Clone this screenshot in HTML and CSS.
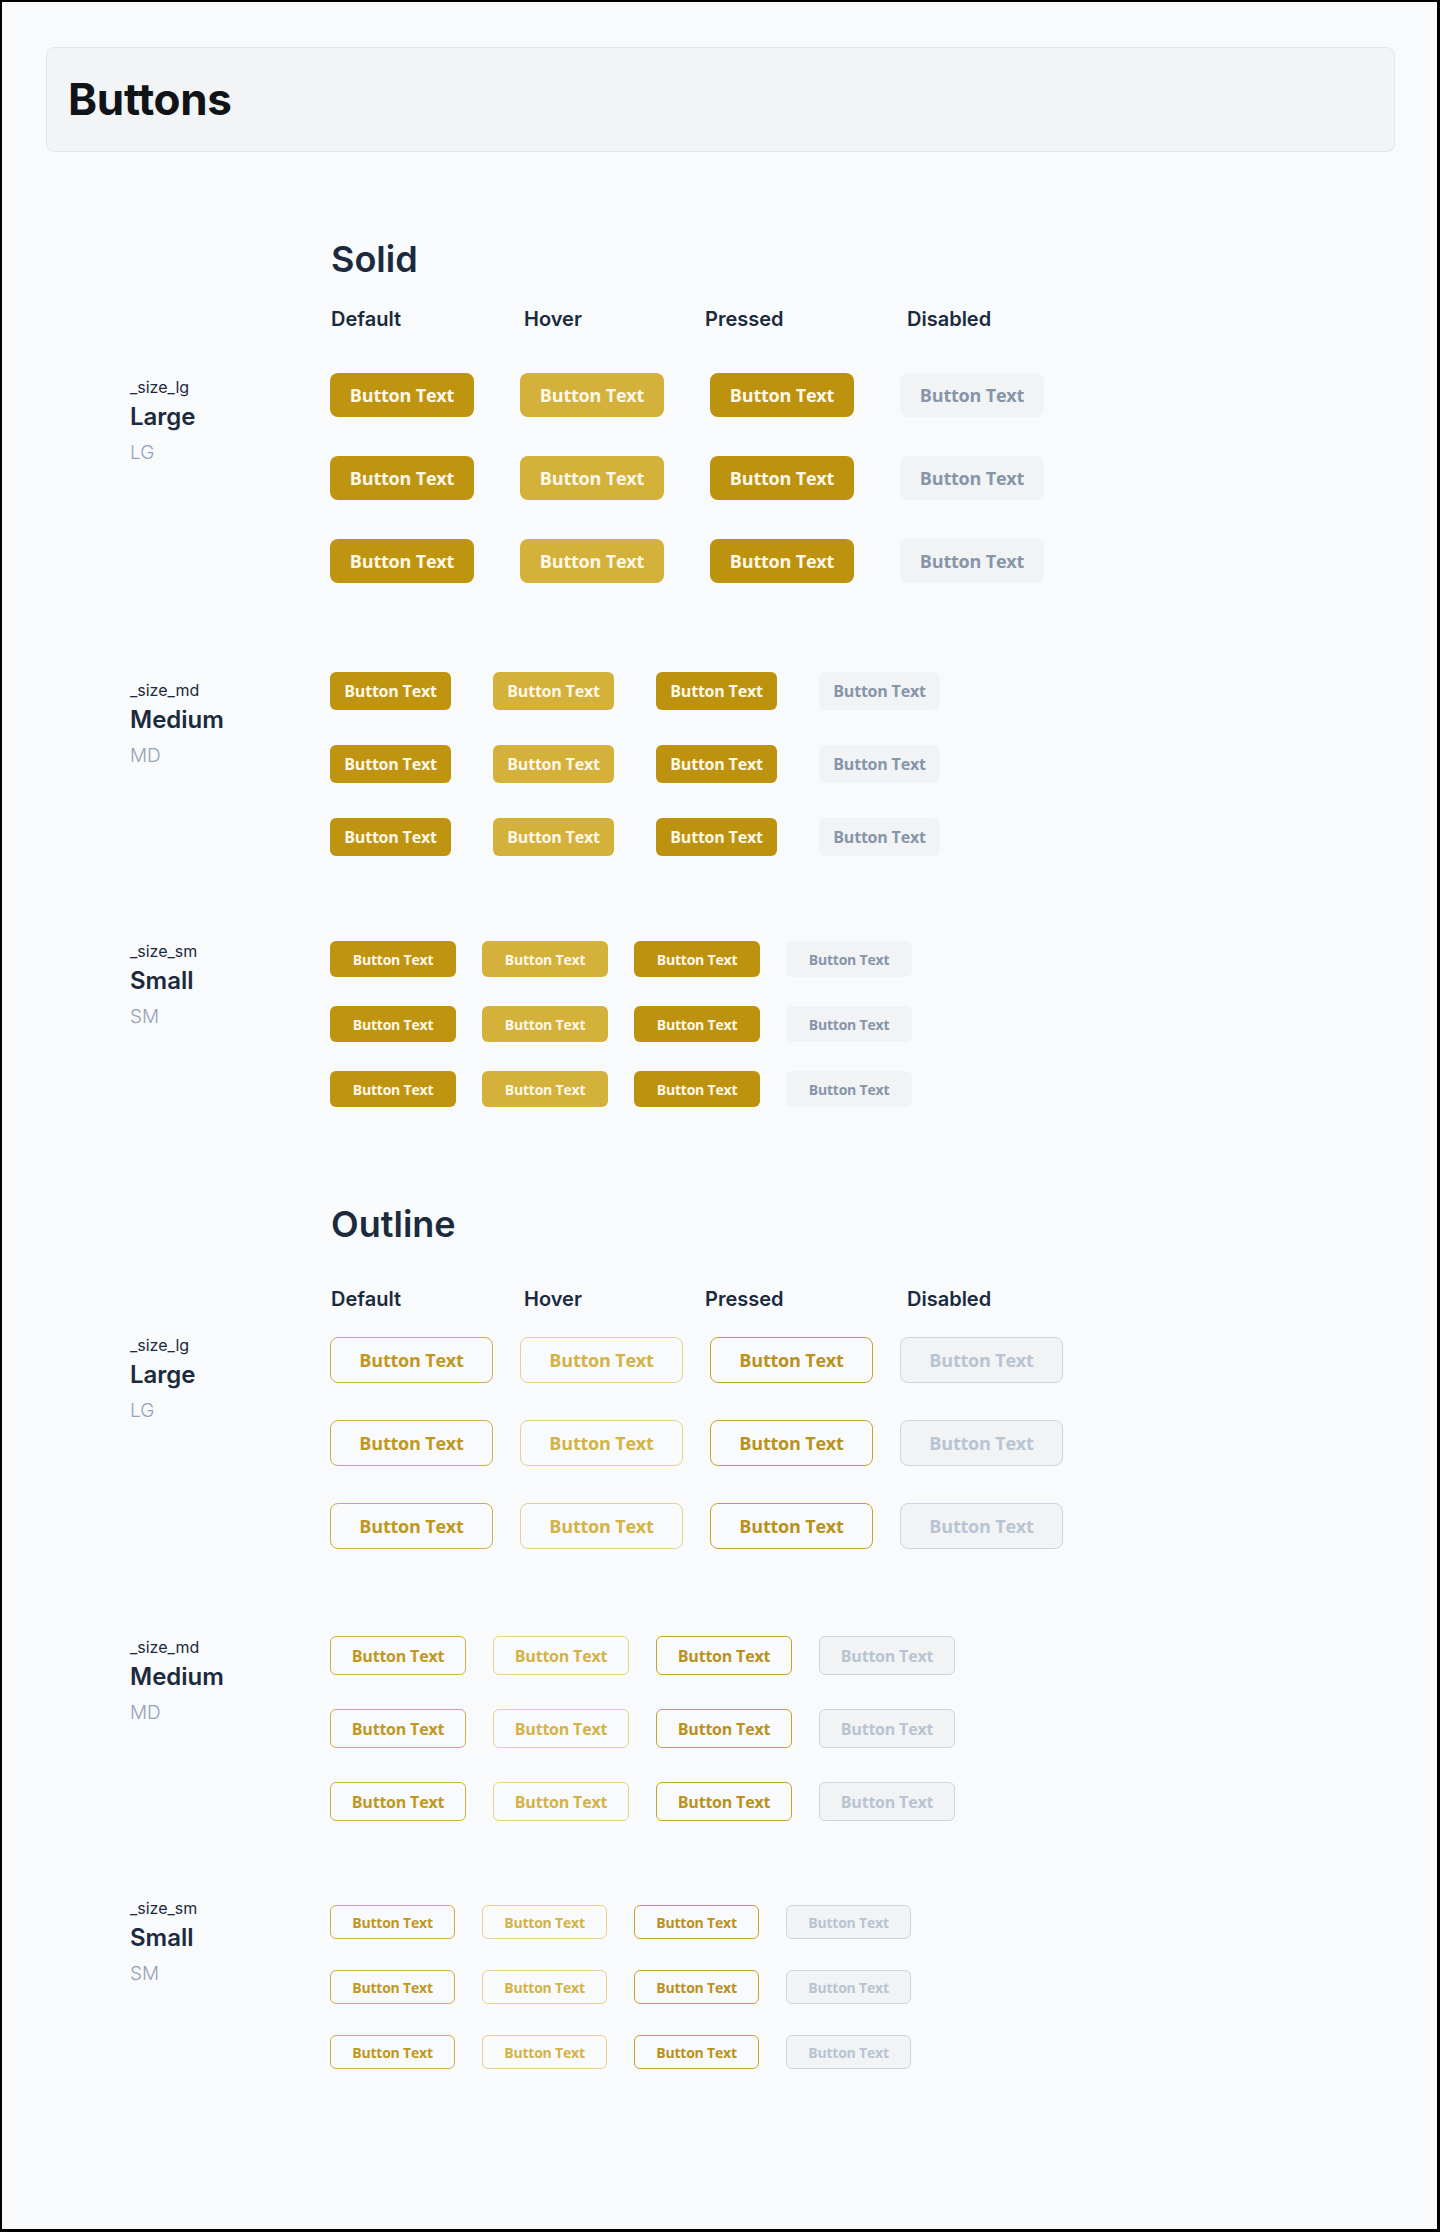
FILE: index.html
```html
<!DOCTYPE html>
<html lang="en">
<head>
  <meta charset="UTF-8" />
  <meta name="viewport" content="width=device-width, initial-scale=1" />
  <title>Buttons</title>
  <link rel="stylesheet" href="styles.css">
</head>
<body>
  <div class="page">
    <div class="page-header">
      <h1>Buttons</h1>
    </div>

    <div class="content">

      <!-- Solid -->
      <section class="variant solid">
        <h2 class="variant-title">Solid</h2>
        <div class="states">
          <span>Default</span><span>Hover</span><span>Pressed</span><span>Disabled</span>
        </div>

        <div class="size-group">
          <div class="size-label lg-label">
            <div class="size-key">_size_lg</div>
            <div class="size-name">Large</div>
            <div class="size-abbr">LG</div>
          </div>
          <div class="btn-grid lg">
            <button class="btn">Button Text</button>
            <button class="btn hover">Button Text</button>
            <button class="btn pressed">Button Text</button>
            <button class="btn" disabled>Button Text</button>
            <button class="btn">Button Text</button>
            <button class="btn hover">Button Text</button>
            <button class="btn pressed">Button Text</button>
            <button class="btn" disabled>Button Text</button>
            <button class="btn">Button Text</button>
            <button class="btn hover">Button Text</button>
            <button class="btn pressed">Button Text</button>
            <button class="btn" disabled>Button Text</button>
          </div>
        </div>

        <div class="size-group">
          <div class="size-label md-label">
            <div class="size-key">_size_md</div>
            <div class="size-name">Medium</div>
            <div class="size-abbr">MD</div>
          </div>
          <div class="btn-grid md">
            <button class="btn">Button Text</button>
            <button class="btn hover">Button Text</button>
            <button class="btn pressed">Button Text</button>
            <button class="btn" disabled>Button Text</button>
            <button class="btn">Button Text</button>
            <button class="btn hover">Button Text</button>
            <button class="btn pressed">Button Text</button>
            <button class="btn" disabled>Button Text</button>
            <button class="btn">Button Text</button>
            <button class="btn hover">Button Text</button>
            <button class="btn pressed">Button Text</button>
            <button class="btn" disabled>Button Text</button>
          </div>
        </div>

        <div class="size-group">
          <div class="size-label sm-label">
            <div class="size-key">_size_sm</div>
            <div class="size-name">Small</div>
            <div class="size-abbr">SM</div>
          </div>
          <div class="btn-grid sm">
            <button class="btn">Button Text</button>
            <button class="btn hover">Button Text</button>
            <button class="btn pressed">Button Text</button>
            <button class="btn" disabled>Button Text</button>
            <button class="btn">Button Text</button>
            <button class="btn hover">Button Text</button>
            <button class="btn pressed">Button Text</button>
            <button class="btn" disabled>Button Text</button>
            <button class="btn">Button Text</button>
            <button class="btn hover">Button Text</button>
            <button class="btn pressed">Button Text</button>
            <button class="btn" disabled>Button Text</button>
          </div>
        </div>
      </section>

      <!-- Outline -->
      <section class="variant outline">
        <h2 class="variant-title">Outline</h2>
        <div class="states">
          <span>Default</span><span>Hover</span><span>Pressed</span><span>Disabled</span>
        </div>

        <div class="size-group">
          <div class="size-label lg-label">
            <div class="size-key">_size_lg</div>
            <div class="size-name">Large</div>
            <div class="size-abbr">LG</div>
          </div>
          <div class="btn-grid lg">
            <button class="btn">Button Text</button>
            <button class="btn hover">Button Text</button>
            <button class="btn pressed">Button Text</button>
            <button class="btn" disabled>Button Text</button>
            <button class="btn">Button Text</button>
            <button class="btn hover">Button Text</button>
            <button class="btn pressed">Button Text</button>
            <button class="btn" disabled>Button Text</button>
            <button class="btn">Button Text</button>
            <button class="btn hover">Button Text</button>
            <button class="btn pressed">Button Text</button>
            <button class="btn" disabled>Button Text</button>
          </div>
        </div>

        <div class="size-group">
          <div class="size-label md-label">
            <div class="size-key">_size_md</div>
            <div class="size-name">Medium</div>
            <div class="size-abbr">MD</div>
          </div>
          <div class="btn-grid md">
            <button class="btn">Button Text</button>
            <button class="btn hover">Button Text</button>
            <button class="btn pressed">Button Text</button>
            <button class="btn" disabled>Button Text</button>
            <button class="btn">Button Text</button>
            <button class="btn hover">Button Text</button>
            <button class="btn pressed">Button Text</button>
            <button class="btn" disabled>Button Text</button>
            <button class="btn">Button Text</button>
            <button class="btn hover">Button Text</button>
            <button class="btn pressed">Button Text</button>
            <button class="btn" disabled>Button Text</button>
          </div>
        </div>

        <div class="size-group">
          <div class="size-label sm-label">
            <div class="size-key">_size_sm</div>
            <div class="size-name">Small</div>
            <div class="size-abbr">SM</div>
          </div>
          <div class="btn-grid sm">
            <button class="btn">Button Text</button>
            <button class="btn hover">Button Text</button>
            <button class="btn pressed">Button Text</button>
            <button class="btn" disabled>Button Text</button>
            <button class="btn">Button Text</button>
            <button class="btn hover">Button Text</button>
            <button class="btn pressed">Button Text</button>
            <button class="btn" disabled>Button Text</button>
            <button class="btn">Button Text</button>
            <button class="btn hover">Button Text</button>
            <button class="btn pressed">Button Text</button>
            <button class="btn" disabled>Button Text</button>
          </div>
        </div>
      </section>

    </div>
  </div>
</body>
</html>
```

FILE: styles.css
```css
* {
  margin: 0; padding: 0; box-sizing: border-box;
}
body {
  font-family: Inter, "Liberation Sans", sans-serif;
  background-color: #000;
  color: #1e293b;
}
.page {
  min-height: 2232px;
  border: 3px solid #000;
  border-top-width: 2px;
  border-left-width: 2px;
  background-color: #f8fafc;
  padding-bottom: 40px;
}

/* header bar */
.page-header {
  margin: 45px 42px 0 44px;
  height: 105px;
  padding: 0 21px;
  display: flex;
  align-items: center;
  background-color: #f2f4f5;
  border: 1px solid #e3e7ea;
  border-radius: 8px;
}
.page-header h1 {
  font-size: 44px;
  font-weight: 700;
  line-height: 53px;
  color: #101418;
  letter-spacing: -0.3px;
}

.content {
  padding-left: 129px;
}

/* sections */
.variant {
  margin-top: 85px;
}
.variant + .variant {
  margin-top: 66px;
}
.variant-title {
  margin-left: 200px;
  font-size: 36px;
  font-weight: 600;
  line-height: 44px;
  color: #1c2a3d;
}
.states {
  margin: 26px 0 42px 200px;
  display: grid;
  grid-template-columns: 193px 181px 202px auto;
  font-size: 20px;
  font-weight: 600;
  line-height: 24px;
  color: #1c2a3d;
}
.outline .states {
  margin-top: 41px;
  margin-bottom: 26px;
}

/* size rows */
.size-group {
  display: flex;
}
.size-group + .size-group {
  margin-top: 50px;
}
.size-label {
  width: 200px;
  flex-shrink: 0;
  margin-left: -1px;
}
.size-key {
  font-size: 16px;
  line-height: 20px;
  color: #1c2a3d;
}
.size-name {
  margin-top: 5px;
  font-size: 24px;
  font-weight: 600;
  line-height: 30px;
  color: #1c2a3d;
}
.size-abbr {
  margin-top: 9px;
  font-size: 19px;
  font-weight: 300;
  line-height: 24px;
  color: #94a3b8;
}
.solid .lg-label { padding-top: 4px; }
.solid .md-label { padding-top: 8px; }
.outline .lg-label { margin-top: -2px; }
.outline .md-label { padding-top: 1px; }
.outline .sm-label { margin-top: -7px; }

.btn-grid {
  display: grid;
  align-items: start;
}
.btn-grid.lg { grid-template-columns: repeat(4, 190px); grid-auto-rows: 83px; }
.btn-grid.md { grid-template-columns: repeat(4, 163px); grid-auto-rows: 73px; }
.btn-grid.sm { grid-template-columns: repeat(4, 152px); grid-auto-rows: 65px; }

/* buttons */
.btn {
  display: flex;
  align-items: center;
  justify-content: center;
  font-family: "Open Sans", "Noto Sans", sans-serif;
  font-weight: 700;
  letter-spacing: -0.2px;
  border: 1px solid transparent;
  cursor: pointer;
}
.lg .btn { font-size: 18px; border-radius: 8px; }
.md .btn { font-size: 16px; border-radius: 6px; }
.sm .btn { font-size: 14px; border-radius: 6px; }

.solid .lg .btn { width: 144px; height: 44px; }
.solid .md .btn { width: 121px; height: 38px; }
.solid .sm .btn { width: 126px; height: 36px; }
.outline .lg .btn { width: 163px; height: 46px; }
.outline .md .btn { width: 136px; height: 39px; }
.outline .sm .btn { width: 125px; height: 34px; }

.solid .btn {
  background-color: #bf9410;
  color: #fff8e8;
}
.solid .btn.hover {
  background-color: #d4b13b;
}
.solid .btn.pressed {
  background-color: #bd920f;
}
.solid .btn:disabled {
  background-color: #f1f3f4;
  color: #8795ab;
  cursor: default;
}

.outline .btn {
  background-color: transparent;
  border-color: #d3ae45;
  color: #bf9820;
}
.outline .btn.hover {
  border-color: #e7d18f;
  color: #d3b346;
}
.outline .btn.pressed {
  border-color: #c9a22e;
  color: #b8921c;
}
.outline .btn:disabled {
  background-color: #f1f3f4;
  border-color: #ccd6e1;
  color: #b9c4d3;
  cursor: default;
}
```
